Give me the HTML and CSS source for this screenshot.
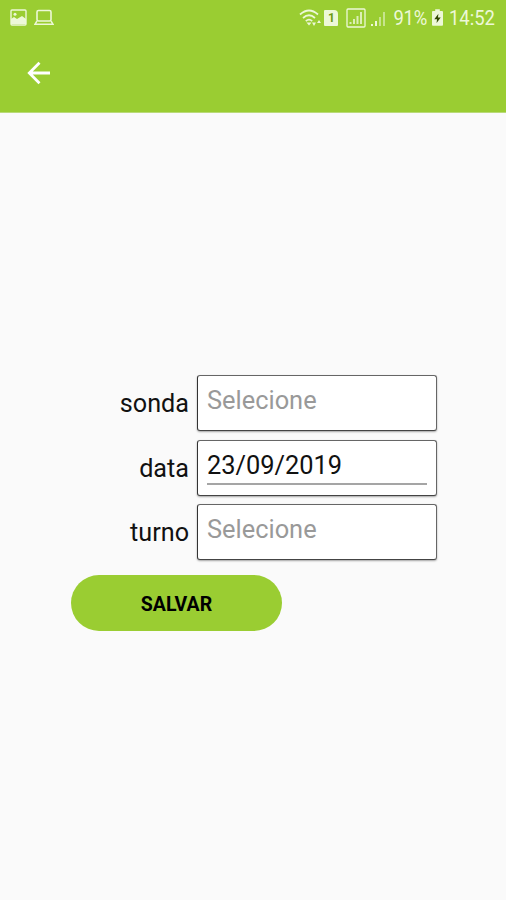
FILE: index.html
```html
<!DOCTYPE html>
<html lang="pt-BR">
<head>
    <meta charset="UTF-8">
    <meta name="viewport" content="width=device-width, initial-scale=1.0">
    <title>Turno</title>
    <link rel="stylesheet" href="styles.css">
</head>
<body>
    <header class="header">
        <div class="status">
            <div class="status-left">
                <svg width="17" height="17" viewBox="0 0 17 17">
                    <rect x="1" y="1" width="15" height="15" rx="1" fill="none" stroke="currentColor" stroke-width="1.4"/>
                    <circle cx="5" cy="5.2" r="1.5" fill="currentColor"/>
                    <path d="M1 15V10l3-2 3 2 5-3 4 3v5z" fill="currentColor"/>
                </svg>
                <svg width="20" height="17" viewBox="0 0 20 17">
                    <rect x="3" y="1.5" width="14" height="10.5" rx="1.5" fill="none" stroke="currentColor" stroke-width="1.6"/>
                    <path d="M3 12L1 15.2h18L17 12" fill="none" stroke="currentColor" stroke-width="1.5"/>
                </svg>
            </div>
            <div class="status-right">
                <svg class="wifi" width="24" height="18" viewBox="0 0 24 18">
                    <g fill="none" stroke="currentColor" stroke-width="1.7">
                        <path d="M1 5.5Q10-2.5 19 5.5"/>
                        <path d="M4 9Q10 3.5 16 9"/>
                        <path d="M6.8 12.2Q10 9.2 13.2 12.2"/>
                    </g>
                    <path d="M7.5 13.5h5L10 16.5z" fill="currentColor"/>
                    <path d="M13 13.5h4l-2 3.5zM18 14h4l-2-3z" fill="currentColor"/>
                </svg>
                <span class="sim">1</span>
                <svg class="signal-box" width="20" height="20" viewBox="0 0 20 20">
                    <rect x="1" y="1" width="18" height="18" rx="1" fill="none" stroke="currentColor" stroke-width="1.3"/>
                    <path d="M4.5 16v-2M8 16v-5M11.5 16V8M15 16V4" stroke="currentColor" stroke-width="2" opacity="0.8"/>
                </svg>
                <svg class="signal" width="16" height="16" viewBox="0 0 16 16">
                    <path d="M2 15v-2M6 15v-5" stroke="currentColor" stroke-width="2"/>
                    <path d="M10 15V6M14 15V1" stroke="currentColor" stroke-width="2" opacity="0.55"/>
                </svg>
                <span class="percent">91%</span>
                <svg class="battery" width="11" height="17" viewBox="0 0 12 18">
                    <path d="M3.5 0h5v2H11q1 0 1 1v14q0 1-1 1H1q-1 0-1-1V3q0-1 1-1h2.5z" fill="currentColor"/>
                    <path d="M7 5L2.500 11h3L5 15l4.500-6h-3z" fill="#304800"/>
                </svg>
                <span class="clock">14:52</span>
            </div>
        </div>
        <nav class="toolbar">
            <a class="back" href="#" aria-label="Voltar">
                <svg width="24" height="24" viewBox="0 0 24 24">
                    <path d="M23 12H2.500M12.500 1.800L2.300 12l10.200 10.200" fill="none" stroke="currentColor" stroke-width="2.800"/>
                </svg>
            </a>
        </nav>
    </header>

    <main class="form">
        <div class="row">
            <span class="label">sonda</span>
            <div class="field"><span class="value placeholder">Selecione</span></div>
        </div>
        <div class="row">
            <span class="label">data</span>
            <div class="field"><span class="value date">23/09/2019</span></div>
        </div>
        <div class="row">
            <span class="label">turno</span>
            <div class="field"><span class="value placeholder">Selecione</span></div>
        </div>
        <button class="save" type="button">SALVAR</button>
    </main>
</body>
</html>
```
FILE: styles.css
```css
:root {
    --primary: #9acd32;
    --status: #edf8d8;
    --bg: #fafafa;
    --text: #111;
}

* {
    box-sizing: border-box;
    margin: 0;
}

body {
    font-family: Roboto, sans-serif;
    background: var(--bg);
    color: var(--text);
    min-height: 900px;
}

/* header */
.header {
    height: 113px;
    background: var(--primary);
    border-bottom: 1px solid #b9da78;
}

.status {
    height: 35px;
    padding: 0 11px 0 10px;
    display: flex;
    justify-content: space-between;
    align-items: center;
    color: var(--status);
}

.status svg {
    display: block;
}

.status-left,
.status-right {
    display: flex;
    align-items: center;
}

.status-left {
    gap: 7px;
}

.status-right {
    font-size: 18.5px;
    line-height: 36px;
}

.sim {
    width: 14px;
    height: 16px;
    margin: 0 8px 0 1px;
    border-radius: 1px 4px 1px 1px;
    background: var(--status);
    color: #6b9a13;
    font-size: 12px;
    font-weight: 700;
    line-height: 16px;
    text-align: center;
}

.signal {
    margin: 2px 7px 0 4px;
}

.battery {
    margin: 0 6px 0 5px;
}

/* tall, narrow digits of the system clock */
.percent,
.clock {
    transform: scaleY(1.12);
}

.percent {
    letter-spacing: -0.3px;
}

.toolbar {
    height: 76px;
    padding: 0 27px;
    display: flex;
    align-items: center;
}

.back {
    display: block;
    height: 24px;
    color: white;
}

/* form */
.form {
    width: 366px;
    margin: 262px 0 0 71px;
    display: flex;
    flex-direction: column;
    gap: 8px;
}

.row {
    display: grid;
    grid-template-columns: 118px 240px;
    gap: 8px;
    align-items: center;
    height: 56.4px;
}

.label {
    padding-top: 1px;
    font-size: 25.2px;
    text-align: right;
}

.field {
    height: 56px;
    padding: 8px 9px;
    background: white;
    border: 1px solid #666;
    border-left-color: #333;
    border-bottom-color: #444;
    border-radius: 3px;
    box-shadow: 0 1px 2px rgba(0, 0, 0, 0.35);
}

.value {
    display: block;
    height: 36px;
    font-size: 25.4px;
    line-height: 32px;
}

.placeholder {
    color: #999;
}

.date {
    border-bottom: 2px solid #a5a5a5;
}

.save {
    width: 211px;
    height: 56px;
    margin-top: 7px;
    padding: 3px 6px 0;
    border: 0;
    border-radius: 28px;
    background: var(--primary);
    color: #000;
    font-family: inherit;
    font-size: 19.5px;
    font-weight: 700;
}
```
